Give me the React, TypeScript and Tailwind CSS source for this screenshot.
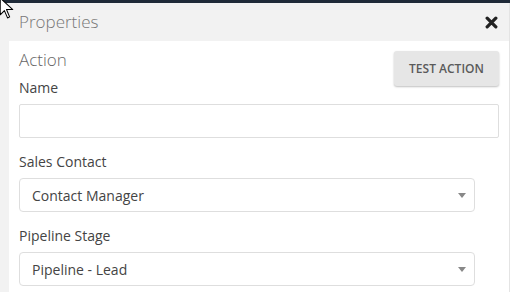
import React from "react";

function CaretDown() {
  return (
    <svg width="8" height="5" viewBox="0 0 8 5" className="shrink-0">
      <path d="M0 0h8L4 5z" fill="#888" />
    </svg>
  );
}

function Field({ label, children, first }: { label: string; children: React.ReactNode; first?: boolean }) {
  return (
    <div className={first ? "" : "mt-[14px]"}>
      <div className="text-[14px] leading-[20px] text-[#444] mb-[6px]">{label}</div>
      {children}
    </div>
  );
}

function SelectBox({ value }: { value: string }) {
  return (
    <div className="w-[456px] h-[34px] rounded-[4px] border border-[#dedede] bg-white flex items-center justify-between pl-[12px] pr-[8px]">
      <span className="text-[14px] text-[#444]">{value}</span>
      <CaretDown />
    </div>
  );
}

export default function App() {
  return (
    <div
      className="relative w-[510px] h-[292px] overflow-hidden bg-white flex flex-col"
      style={{ fontFamily: '"Open Sans", "Liberation Sans", sans-serif' }}
    >
      <div className="h-[3px] bg-[#1f2a38] shrink-0" />
      <div className="flex flex-1">
        <div className="w-[9px] bg-[#f2f2f2]" />
        <div className="flex-1 flex flex-col">
          <div className="h-[38px] bg-[#f2f2f2] flex items-center justify-between pl-[10px] pr-[11px]">
            <span className="text-[17px] font-light text-[#777]">Properties</span>
            <svg width="13" height="13" viewBox="0 0 12 12" className="mt-[1px]">
              <path d="M2 2L10 10M10 2L2 10" stroke="#222" strokeWidth="3" strokeLinecap="round" />
            </svg>
          </div>
          <div className="px-[10px] pt-[9px]">
            <div className="flex justify-between items-start h-[28px]">
              <span className="text-[17px] leading-[20px] font-light text-[#666]">Action</span>
              <button className="mt-[1px] w-[105px] h-[35px] rounded-[3px] bg-[#e6e6e6] text-[12px] font-semibold text-[#5a5a5a] shadow-[0_1px_2px_rgba(0,0,0,0.25)]">
                TEST ACTION
              </button>
            </div>
            <Field label="Name" first>
              <div className="w-[480px] h-[34px] rounded-[2px] border border-[#dedede] bg-white" />
            </Field>
            <Field label="Sales Contact">
              <SelectBox value="Contact Manager" />
            </Field>
            <Field label="Pipeline Stage">
              <SelectBox value="Pipeline - Lead" />
            </Field>
          </div>
        </div>
        <div className="w-[1px] bg-[#e4e4e4]" />
      </div>
      <svg className="absolute left-[-1px] top-[-3px]" width="15" height="23" viewBox="0 0 14 22">
        <path d="M1 1v16l4-4 3 7 2-1-3-7h6z" fill="#fff" stroke="#000" strokeWidth="1" strokeLinejoin="round" />
      </svg>
    </div>
  );
}
